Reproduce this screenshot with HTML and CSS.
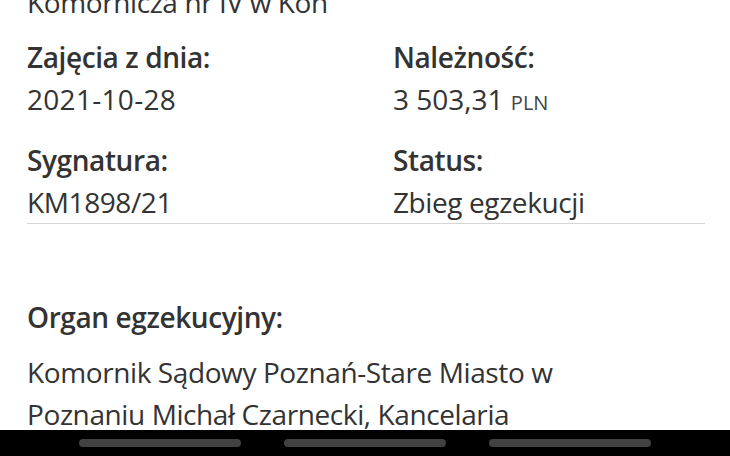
FILE: index.html
```html
<!DOCTYPE html>
<html lang="pl">
<head>
<meta charset="utf-8">
<title>Zajęcie</title>
<link rel="stylesheet" href="styles.css">
</head>
<body>
<main class="details">
  <p class="text prev">Komornicza nr IV w Koń</p>
  <section class="grid">
    <div class="field">
      <div class="label">Zajęcia z dnia:</div>
      <div class="value num">2021-10-28</div>
    </div>
    <div class="field">
      <div class="label">Należność:</div>
      <div class="value amount">3 503,31 <span class="cur">PLN</span></div>
    </div>
    <div class="field">
      <div class="label">Sygnatura:</div>
      <div class="value">KM1898/21</div>
    </div>
    <div class="field">
      <div class="label">Status:</div>
      <div class="value">Zbieg egzekucji</div>
    </div>
  </section>
  <section class="organ">
    <div class="label">Organ egzekucyjny:</div>
    <div class="value para">Komornik Sądowy Poznań-Stare Miasto w<br>Poznaniu Michał Czarnecki, Kancelaria</div>
  </section>
</main>
<nav class="navbar">
  <span class="pill"></span>
  <span class="pill"></span>
  <span class="pill"></span>
</nav>
</body>
</html>
```
FILE: styles.css
```css
html, body {
  margin: 0;
  padding: 0;
  background: #ffffff;
}
body {
  width: 730px;
  height: 456px;
  overflow: hidden;
  font-family: "Open Sans", "Noto Sans", sans-serif;
  color: #333333;
}
.details {
  padding: 0 25px 0 27px;
  margin-top: -19px;
}
.text {
  margin: 0;
  font-size: 28px;
  line-height: 42px;
  letter-spacing: -0.4px;
}
.prev {
  margin-bottom: 13px;
}
.grid {
  display: grid;
  grid-template-columns: 366px 1fr;
  row-gap: 15px;
  border-bottom: 1px solid #d6d6d6;
}
.label {
  font-size: 28px;
  line-height: 42px;
  font-weight: 600;
  letter-spacing: -0.4px;
  color: #333333;
}
.value {
  font-size: 28px;
  line-height: 42px;
  font-weight: 400;
  letter-spacing: -0.4px;
  color: #333333;
}
.value.num {
  letter-spacing: 0.3px;
}
.value.amount {
  letter-spacing: 0;
}
.cur {
  font-size: 20px;
  color: #444444;
}
.organ {
  margin-top: 72px;
}
.organ .para {
  margin-top: 13px;
}
.navbar {
  position: fixed;
  left: 0;
  right: 0;
  bottom: 0;
  height: 26px;
  background: #000000;
  display: flex;
  justify-content: center;
  align-items: center;
  gap: 43px;
}
.pill {
  width: 162px;
  height: 8px;
  border-radius: 4px;
  background: #414141;
}
```
